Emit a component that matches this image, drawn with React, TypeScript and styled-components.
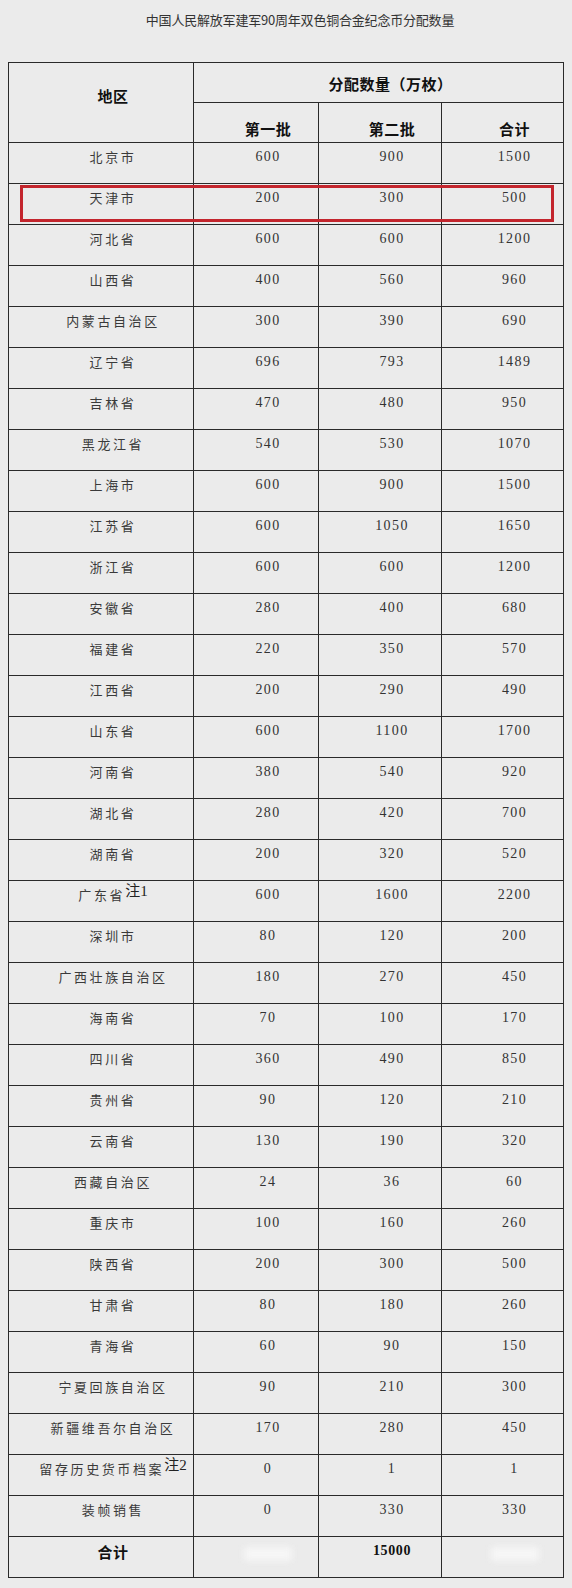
import styled, { createGlobalStyle } from "styled-components";

type Row = {
  region: string;
  note?: string;
  first: string;
  second: string;
  total: string;
};

const rows: Row[] = [
  { region: "北京市", first: "600", second: "900", total: "1500" },
  { region: "天津市", first: "200", second: "300", total: "500" },
  { region: "河北省", first: "600", second: "600", total: "1200" },
  { region: "山西省", first: "400", second: "560", total: "960" },
  { region: "内蒙古自治区", first: "300", second: "390", total: "690" },
  { region: "辽宁省", first: "696", second: "793", total: "1489" },
  { region: "吉林省", first: "470", second: "480", total: "950" },
  { region: "黑龙江省", first: "540", second: "530", total: "1070" },
  { region: "上海市", first: "600", second: "900", total: "1500" },
  { region: "江苏省", first: "600", second: "1050", total: "1650" },
  { region: "浙江省", first: "600", second: "600", total: "1200" },
  { region: "安徽省", first: "280", second: "400", total: "680" },
  { region: "福建省", first: "220", second: "350", total: "570" },
  { region: "江西省", first: "200", second: "290", total: "490" },
  { region: "山东省", first: "600", second: "1100", total: "1700" },
  { region: "河南省", first: "380", second: "540", total: "920" },
  { region: "湖北省", first: "280", second: "420", total: "700" },
  { region: "湖南省", first: "200", second: "320", total: "520" },
  { region: "广东省", note: "注1", first: "600", second: "1600", total: "2200" },
  { region: "深圳市", first: "80", second: "120", total: "200" },
  { region: "广西壮族自治区", first: "180", second: "270", total: "450" },
  { region: "海南省", first: "70", second: "100", total: "170" },
  { region: "四川省", first: "360", second: "490", total: "850" },
  { region: "贵州省", first: "90", second: "120", total: "210" },
  { region: "云南省", first: "130", second: "190", total: "320" },
  { region: "西藏自治区", first: "24", second: "36", total: "60" },
  { region: "重庆市", first: "100", second: "160", total: "260" },
  { region: "陕西省", first: "200", second: "300", total: "500" },
  { region: "甘肃省", first: "80", second: "180", total: "260" },
  { region: "青海省", first: "60", second: "90", total: "150" },
  { region: "宁夏回族自治区", first: "90", second: "210", total: "300" },
  { region: "新疆维吾尔自治区", first: "170", second: "280", total: "450" },
  { region: "留存历史货币档案", note: "注2", first: "0", second: "1", total: "1" },
  { region: "装帧销售", first: "0", second: "330", total: "330" },
];

const GlobalStyle = createGlobalStyle`
  html, body {
    margin: 0;
    padding: 0;
    background: #ebebeb;
  }
`;

const Page = styled.div`
  width: 572px;
  padding: 0 8px;
  box-sizing: border-box;
  color: #2e2e2e;
`;

const Title = styled.div`
  height: 40px;
  line-height: 40px;
  padding-left: 28px;
  text-align: center;
  font-family: "Noto Sans CJK SC", "Noto Sans", sans-serif;
  font-size: 13px;
  letter-spacing: -0.2px;
  color: #333;
  margin-bottom: 22px;
`;

const TableWrap = styled.div`
  position: relative;
  width: 555px;
`;

const Table = styled.table`
  width: 555px;
  border-collapse: collapse;
  table-layout: fixed;
`;

const Cell = styled.td<{ $head?: boolean; $top?: number }>`
  border: 1px solid #2a2a2a;
  padding: ${(p) => p.$top ?? 4}px 0 0 24px;
  height: ${(p) => (p.$head ? 40 : 41)}px;
  box-sizing: border-box;
  vertical-align: top;
  text-align: center;
  line-height: 20px;
  white-space: nowrap;
  font-family: ${(p) =>
    p.$head
      ? `"Noto Sans CJK SC", sans-serif`
      : `"Liberation Serif", "Noto Sans CJK SC", serif`};
  font-size: ${(p) => (p.$head ? 15 : 14)}px;
  font-weight: ${(p) => (p.$head ? 700 : 400)};
  letter-spacing: ${(p) => (p.$head ? 0.5 : 1.4)}px;
  color: ${(p) => (p.$head ? "#111" : "#333")};
`;

const Region = styled.span`
  font-family: "Noto Sans CJK SC", sans-serif;
  font-size: 13px;
  letter-spacing: 2.6px;
  color: #3a3a3a;
`;

const Note = styled.sup`
  font-family: "Liberation Serif", "Noto Sans CJK SC", serif;
  font-size: 15px;
  letter-spacing: 0;
  vertical-align: 4px;
  line-height: 0;
  color: #222;
`;

const Strong = styled.span`
  font-family: "Liberation Serif", serif;
  font-size: 14px;
  font-weight: 700;
  letter-spacing: 0.6px;
  color: #111;
`;

const Smudge = styled.span`
  display: inline-block;
  width: 48px;
  height: 14px;
  margin-top: 6px;
  background: rgba(250, 250, 250, 0.75);
  filter: blur(3px);
`;

const Highlight = styled.div`
  position: absolute;
  left: 12px;
  top: 123px;
  width: 534px;
  height: 37px;
  border: 3px solid #c3252d;
  box-sizing: border-box;
  pointer-events: none;
`;

export default function App() {
  return (
    <>
      <GlobalStyle />
      <Page>
        <Title>中国人民解放军建军90周年双色铜合金纪念币分配数量</Title>
        <TableWrap>
          <Table>
            <colgroup>
              <col style={{ width: 185 }} />
              <col style={{ width: 125 }} />
              <col style={{ width: 123 }} />
              <col style={{ width: 122 }} />
            </colgroup>
            <thead>
              <tr>
                <Cell as="th" rowSpan={2} $head $top={23}>
                  地区
                </Cell>
                <Cell as="th" colSpan={3} $head $top={11}>
                  分配数量（万枚）
                </Cell>
              </tr>
              <tr>
                <Cell as="th" $head $top={16}>
                  第一批
                </Cell>
                <Cell as="th" $head $top={16}>
                  第二批
                </Cell>
                <Cell as="th" $head $top={16}>
                  合计
                </Cell>
              </tr>
            </thead>
            <tbody>
              {rows.map((r) => (
                <tr key={r.region}>
                  <Cell>
                    <Region>{r.region}</Region>
                    {r.note && <Note>{r.note}</Note>}
                  </Cell>
                  <Cell>{r.first}</Cell>
                  <Cell>{r.second}</Cell>
                  <Cell>{r.total}</Cell>
                </tr>
              ))}
              <tr>
                <Cell $head $top={5}>
                  合计
                </Cell>
                <Cell>
                  <Smudge />
                </Cell>
                <Cell>
                  <Strong>15000</Strong>
                </Cell>
                <Cell>
                  <Smudge />
                </Cell>
              </tr>
            </tbody>
          </Table>
          <Highlight />
        </TableWrap>
      </Page>
    </>
  );
}
